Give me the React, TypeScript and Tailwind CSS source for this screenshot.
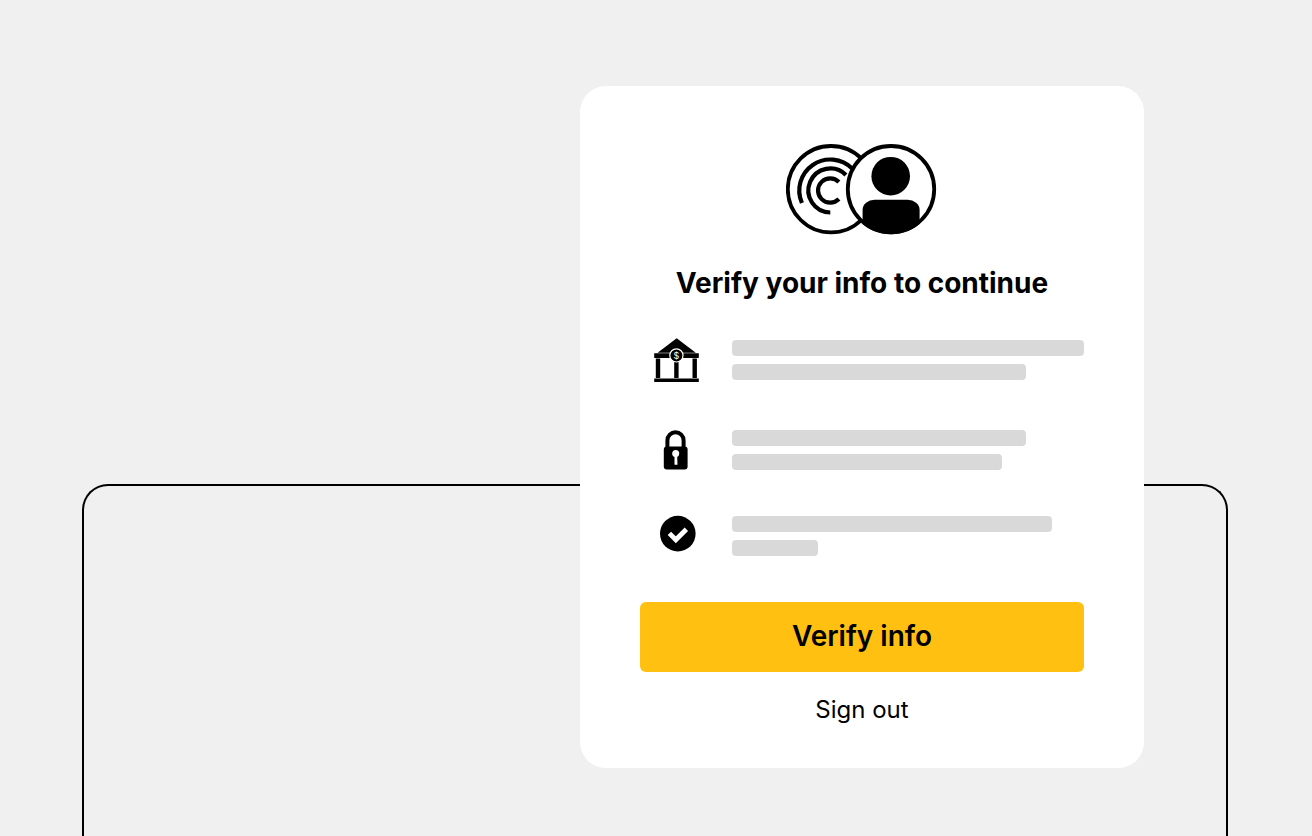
import type { ReactNode } from "react";

interface InfoRow {
  id: string;
  icon: ReactNode;
  bars: string[];
  spacing: string;
}

function BankIcon() {
  return (
    <svg width="48" height="48" viewBox="0 0 48 48" aria-hidden="true">
      <path d="M24.7 2.2 43.8 16.8H5.6z" />
      <path d="M2.2 17.2h44.6V22H2.2zM2.2 42.6h44.6V46H2.2z" />
      <path d="M3.8 22.6h4.4V42H3.8zM22.2 22.6h4.4V42h-4.4zM40.5 22.6h4.4V42h-4.4z" />
      <circle cx="24.4" cy="19.4" r="6.6" stroke="#fff" strokeWidth="1.2" />
      <text x="24.4" y="22.8" fill="#fff" fontSize="9" fontWeight="400" textAnchor="middle">
        $
      </text>
    </svg>
  );
}

function LockIcon() {
  return (
    <svg width="48" height="48" viewBox="0 0 48 48" aria-hidden="true">
      <path d="M15.4 23v-8.6a8.1 8.1 0 0 1 16.2 0V23" fill="none" stroke="#000" strokeWidth="4" />
      <rect x="11.8" y="20.5" width="23.8" height="23" rx="3" />
      <circle cx="23.7" cy="27.4" r="3.5" fill="#fff" />
      <path d="M22.5 28h2.6l.4 10.8h-3z" fill="#fff" />
    </svg>
  );
}

function CheckIcon() {
  return (
    <svg width="48" height="48" viewBox="0 0 48 48" aria-hidden="true">
      <circle cx="25.8" cy="21.6" r="17.8" />
      <path d="m17.4 21.4 6.4 6.4L34.4 17.2" fill="none" stroke="#fff" strokeWidth="4.8" />
    </svg>
  );
}

function AccountBadge() {
  return (
    <svg width="152" height="91" viewBox="0 0 152 91" fill="none" stroke="#000" strokeWidth="4.2" aria-hidden="true">
      <circle cx="45" cy="45.2" r="43.2" strokeWidth="3.8" />
      <path d="M52.9 37.9a12.2 12.2 0 1 0 0 17.2" />
      <path d="M59.9 30.9A22 22 0 1 0 44.3 68.5" />
      <path d="M66.2 24.6A31 31 0 0 0 15.9 59" />
      <circle cx="105" cy="45.2" r="43.2" fill="#fff" strokeWidth="3.8" />
      <clipPath id="badge-clip">
        <circle cx="105" cy="45.2" r="45" />
      </clipPath>
      <circle cx="104.7" cy="32.2" r="19.3" fill="#000" stroke="none" />
      <rect x="76.6" y="55.8" width="57" height="50" rx="12" ry="10" fill="#000" stroke="none" clipPath="url(#badge-clip)" />
    </svg>
  );
}

const ROWS: InfoRow[] = [
  { id: "bank", icon: <BankIcon />, bars: ["w-full", "w-[294px]"], spacing: "mt-[33px]" },
  { id: "lock", icon: <LockIcon />, bars: ["w-[294px]", "w-[270px]"], spacing: "mt-[42px]" },
  { id: "check", icon: <CheckIcon />, bars: ["w-[320px]", "w-[86px]"], spacing: "mt-[38px]" },
];

export default function App() {
  return (
    <div className="grid min-h-screen bg-[#f0f0f0] font-['Inter',sans-serif] text-black">
      <div className="col-start-1 row-start-1 mt-[484px] mr-[84px] ml-[82px] rounded-t-[26px] border-2 border-b-0 border-black" />
      <main className="z-10 col-start-1 row-start-1 mt-[86px] mr-[168px] mb-[68px] w-full max-w-[564px] self-start justify-self-end rounded-[26px] bg-white px-[60px] pt-[58px] pb-10">
        <div className="flex justify-center">
          <AccountBadge />
        </div>
        <h1 className="mt-7 text-center text-[28px] leading-10 font-bold">Verify your info to continue</h1>
        <ul>
          {ROWS.map((row) => (
            <li key={row.id} className={`flex items-center gap-5 ${row.spacing}`}>
              <div className="flex w-[72px] shrink-0 justify-center">{row.icon}</div>
              <div className="flex min-w-0 flex-1 flex-col gap-2">
                {row.bars.map((width) => (
                  <div key={width} className={`h-4 max-w-full rounded bg-[#d9d9d9] ${width}`} />
                ))}
              </div>
            </li>
          ))}
        </ul>
        <button
          type="button"
          className="mt-[42px] h-[70px] w-full rounded-md bg-[#ffc012] pb-0.5 text-[28px] font-semibold"
        >
          Verify info
        </button>
        <button type="button" className="mt-5 h-9 w-full text-2xl">
          Sign out
        </button>
      </main>
    </div>
  );
}
